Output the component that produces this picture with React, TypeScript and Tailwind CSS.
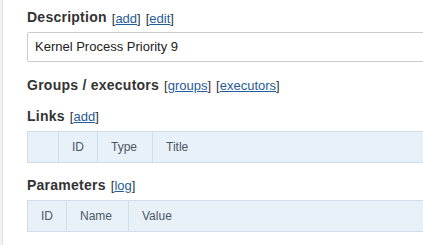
const font = { fontFamily: '"Liberation Sans", Arial, sans-serif' };

function Link({ children }: { children: string }) {
  return (
    <span className="text-[13px] font-normal text-[#333]">
      [<a href="#" className="text-[#1f5c99] underline">{children}</a>]
    </span>
  );
}

function Heading({ title, links, className }: { title: string; links: string[]; className: string }) {
  return (
    <div className={`flex h-5 items-center whitespace-nowrap ${className}`}>
      <span className="text-[14px] font-bold tracking-[0.25px] text-[#333]">{title}</span>
      {links.map((l, i) => (
        <span key={l} className={i === 0 ? 'ml-[5px]' : 'ml-[5px]'}>
          <Link>{l}</Link>
        </span>
      ))}
    </div>
  );
}

function HeaderTable({ cols }: { cols: { label: string; w?: string }[] }) {
  return (
    <table className="mt-[5px] w-[700px] border-collapse">
      <thead>
        <tr className="h-[31px] bg-[#e8f0f8]">
          {cols.map((c, i) => (
            <th
              key={i}
              className={`border border-[#cfdde9] pl-[13px] text-left text-[12px] font-normal text-[#4a5866] ${c.w ?? ''}`}
            >
              {c.label}
            </th>
          ))}
        </tr>
      </thead>
    </table>
  );
}

export default function App() {
  return (
    <div className="flex h-[245px] w-[423px] overflow-hidden bg-white" style={font}>
      <div className="w-[2px] shrink-0 bg-[#f2f2f2]" />
      <div className="w-px shrink-0 bg-[#e2e2e2]" />
      <div className="min-w-0 flex-1 pl-[24px] pt-[8px]">
        <Heading title="Description" links={['add', 'edit']} className="h-[19px]" />
        <div className="mt-[5px] flex h-[30px] w-[700px] items-center rounded-[2px] border border-[#cccccc] pl-[7px] text-[13px] text-[#222]">
          Kernel Process Priority 9
        </div>
        <Heading title="Groups / executors" links={['groups', 'executors']} className="mt-[13px]" />
        <Heading title="Links" links={['add']} className="mt-[11px]" />
        <HeaderTable
          cols={[
            { label: '', w: 'w-[31px]' },
            { label: 'ID', w: 'w-[39px]' },
            { label: 'Type', w: 'w-[55px]' },
            { label: 'Title' },
          ]}
        />
        <Heading title="Parameters" links={['log']} className="mt-[12px]" />
        <HeaderTable
          cols={[
            { label: 'ID', w: 'w-[39px]' },
            { label: 'Name', w: 'w-[62px]' },
            { label: 'Value' },
          ]}
        />
      </div>
    </div>
  );
}
